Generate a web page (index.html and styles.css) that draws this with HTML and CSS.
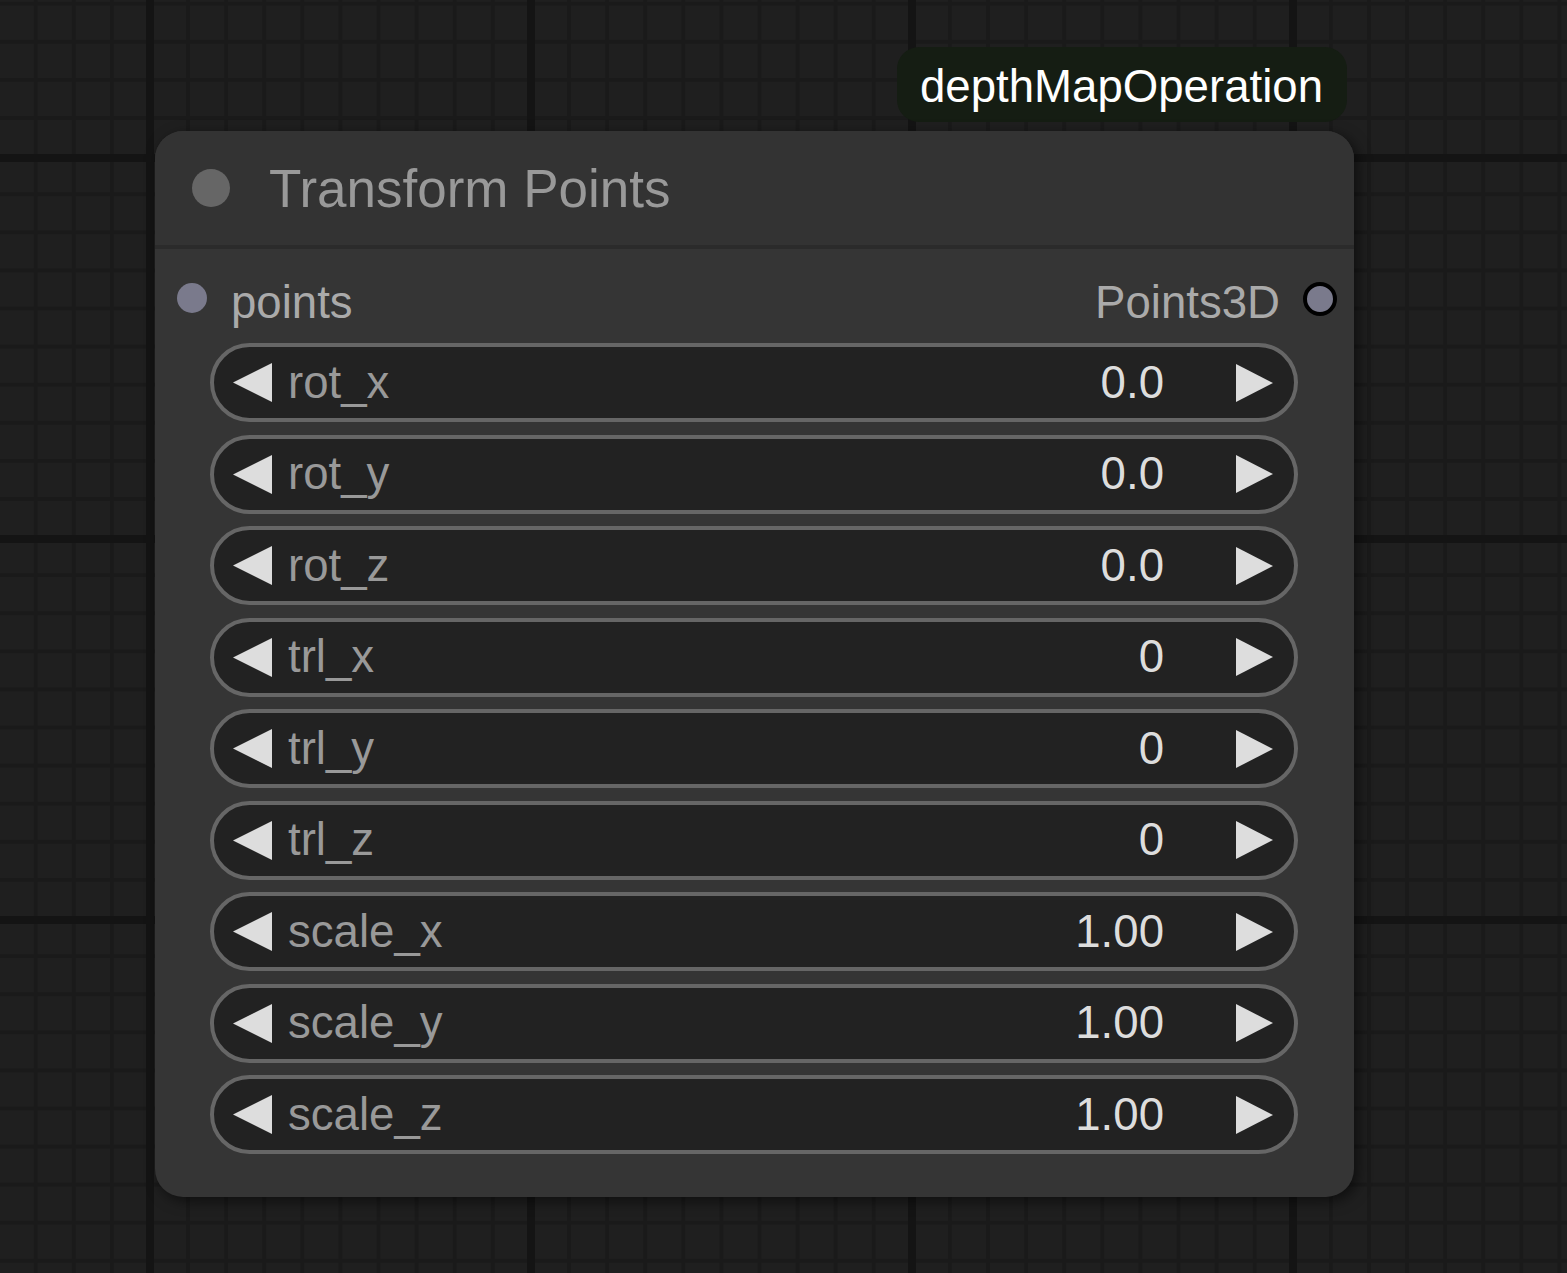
FILE: index.html
```html
<!DOCTYPE html>
<html>
<head>
<meta charset="utf-8">
<link rel="stylesheet" href="styles.css">
</head>
<body>
<div class="canvas">
  <div class="badge">depthMapOperation</div>
  <div class="node">
    <div class="node-title">
      <span class="title-dot"></span>
      <span class="title-text">Transform Points</span>
    </div>
    <div class="node-body">
      <div class="slot-row">
        <div class="slot-in">
          <span class="dot-in"></span>
          <span class="slot-label">points</span>
        </div>
        <div class="slot-out">
          <span class="slot-label">Points3D</span>
          <span class="dot-out"></span>
        </div>
      </div>
      <div class="widgets">
        <div class="widget"><svg class="arr" width="39" height="39" viewBox="0 0 39 39"><polygon points="0,19.5 39,0 39,39"/></svg><span class="w-label">rot_x</span><span class="w-value">0.0</span><svg class="arr arr-r" width="37" height="38" viewBox="0 0 37 38"><polygon points="0,0 37,19 0,38"/></svg></div>
        <div class="widget"><svg class="arr" width="39" height="39" viewBox="0 0 39 39"><polygon points="0,19.5 39,0 39,39"/></svg><span class="w-label">rot_y</span><span class="w-value">0.0</span><svg class="arr arr-r" width="37" height="38" viewBox="0 0 37 38"><polygon points="0,0 37,19 0,38"/></svg></div>
        <div class="widget"><svg class="arr" width="39" height="39" viewBox="0 0 39 39"><polygon points="0,19.5 39,0 39,39"/></svg><span class="w-label">rot_z</span><span class="w-value">0.0</span><svg class="arr arr-r" width="37" height="38" viewBox="0 0 37 38"><polygon points="0,0 37,19 0,38"/></svg></div>
        <div class="widget"><svg class="arr" width="39" height="39" viewBox="0 0 39 39"><polygon points="0,19.5 39,0 39,39"/></svg><span class="w-label">trl_x</span><span class="w-value">0</span><svg class="arr arr-r" width="37" height="38" viewBox="0 0 37 38"><polygon points="0,0 37,19 0,38"/></svg></div>
        <div class="widget"><svg class="arr" width="39" height="39" viewBox="0 0 39 39"><polygon points="0,19.5 39,0 39,39"/></svg><span class="w-label">trl_y</span><span class="w-value">0</span><svg class="arr arr-r" width="37" height="38" viewBox="0 0 37 38"><polygon points="0,0 37,19 0,38"/></svg></div>
        <div class="widget"><svg class="arr" width="39" height="39" viewBox="0 0 39 39"><polygon points="0,19.5 39,0 39,39"/></svg><span class="w-label">trl_z</span><span class="w-value">0</span><svg class="arr arr-r" width="37" height="38" viewBox="0 0 37 38"><polygon points="0,0 37,19 0,38"/></svg></div>
        <div class="widget"><svg class="arr" width="39" height="39" viewBox="0 0 39 39"><polygon points="0,19.5 39,0 39,39"/></svg><span class="w-label">scale_x</span><span class="w-value">1.00</span><svg class="arr arr-r" width="37" height="38" viewBox="0 0 37 38"><polygon points="0,0 37,19 0,38"/></svg></div>
        <div class="widget"><svg class="arr" width="39" height="39" viewBox="0 0 39 39"><polygon points="0,19.5 39,0 39,39"/></svg><span class="w-label">scale_y</span><span class="w-value">1.00</span><svg class="arr arr-r" width="37" height="38" viewBox="0 0 37 38"><polygon points="0,0 37,19 0,38"/></svg></div>
        <div class="widget"><svg class="arr" width="39" height="39" viewBox="0 0 39 39"><polygon points="0,19.5 39,0 39,39"/></svg><span class="w-label">scale_z</span><span class="w-value">1.00</span><svg class="arr arr-r" width="37" height="38" viewBox="0 0 37 38"><polygon points="0,0 37,19 0,38"/></svg></div>
      </div>
    </div>
  </div>
</div>
</body>
</html>
```
FILE: styles.css
```css
html, body {
  margin: 0;
  padding: 0;
}
body {
  width: 1567px;
  height: 1273px;
  overflow: hidden;
  font-family: "Liberation Sans", Arial, sans-serif;
  background-color: #1f1f1f;
  background-image:
    linear-gradient(to right, #141414 0, #141414 8px, transparent 8px),
    linear-gradient(to bottom, #141414 0, #141414 8px, transparent 8px),
    linear-gradient(to right, #1a1a1a 0, #1a1a1a 4px, transparent 4px),
    linear-gradient(to bottom, #1a1a1a 0, #1a1a1a 4px, transparent 4px);
  background-size: 381px 100%, 100% 381px, 38.1px 100%, 100% 38.1px;
  background-position: 146px 0, 0 535px, 148px 0, 0 497px;
}
.canvas {
  position: relative;
  width: 1567px;
  height: 1273px;
}
.badge {
  position: absolute;
  left: 897px;
  top: 47px;
  width: 450px;
  height: 75px;
  box-sizing: border-box;
  padding: 4px 0 0 23px;
  display: flex;
  align-items: center;
  background: #151d13;
  border-radius: 22px;
  color: #ffffff;
  font-size: 45.6px;
}
.node {
  position: absolute;
  left: 155px;
  top: 131px;
  width: 1199px;
  background: #353535;
  border-radius: 28px;
  box-shadow: 4px 4px 14px rgba(0, 0, 0, 0.55);
  overflow: hidden;
}
.node-title {
  height: 114px;
  background: #333333;
  border-bottom: 4px solid #2b2b2b;
  display: flex;
  align-items: center;
  padding-left: 37px;
}
.title-dot {
  width: 38px;
  height: 38px;
  border-radius: 50%;
  background: #666666;
  flex: none;
}
.title-text {
  margin-left: 39px;
  color: #999999;
  font-size: 53px;
}
.node-body {
  padding: 27px 0 43px 0;
}
.slot-row {
  height: 46px;
  display: flex;
  align-items: center;
  justify-content: space-between;
  padding: 0 17px 0 22px;
}
.slot-in, .slot-out {
  display: flex;
  align-items: center;
}
.dot-in {
  width: 30px;
  height: 30px;
  border-radius: 50%;
  background: #7a7a8c;
  margin-right: 24px;
  margin-top: -2px;
}
.dot-out {
  width: 26px;
  height: 26px;
  border-radius: 50%;
  background: #7a7a8c;
  border: 4px solid #000000;
  margin-left: 23px;
}
.slot-label {
  color: #aaaaaa;
  font-size: 45.6px;
  position: relative;
  top: 4px;
}
.widgets {
  margin-top: 21px;
  display: flex;
  flex-direction: column;
  gap: 12.5px;
  padding: 0 56px 0 55px;
}
.widget {
  height: 79px;
  box-sizing: border-box;
  border: 4px solid #666666;
  border-radius: 40px;
  background: #222222;
  display: flex;
  align-items: center;
  padding: 0 21px 0 19px;
  font-size: 45.6px;
}
.arr {
  flex: none;
  fill: #dddddd;
}
.w-label {
  margin-left: 16px;
  color: #999999;
  flex: 1;
}
.w-value {
  color: #dddddd;
  margin-right: 72px;
}
```
